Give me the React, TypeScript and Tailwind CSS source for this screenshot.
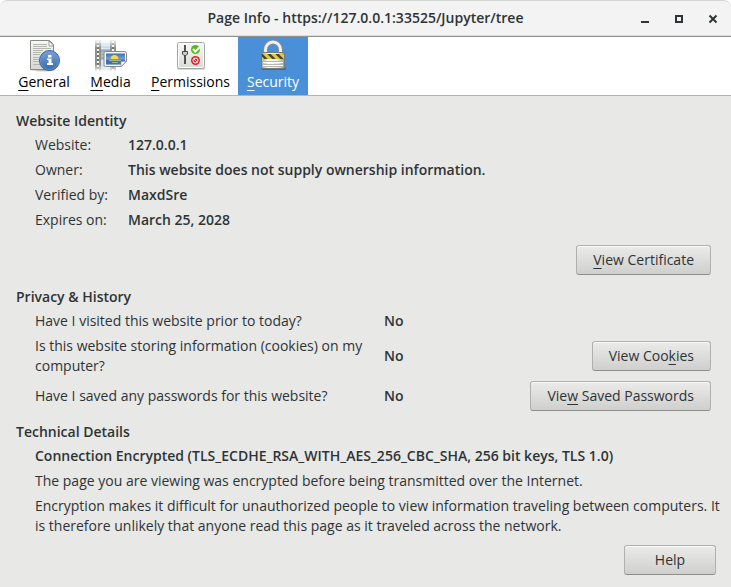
import type { ReactNode } from "react";

function Key({ children }: { children: ReactNode }) {
  return <span className="underline decoration-1 underline-offset-3 [text-decoration-skip-ink:none]">{children}</span>;
}

function GeneralIcon() {
  return (
    <svg className="size-8" viewBox="0 0 32 32" aria-hidden="true">
      <defs>
        <linearGradient id="g-page" x1="0" y1="0" x2="0" y2="1">
          <stop offset="0" stopColor="#f8f8f6" />
          <stop offset="1" stopColor="#d6d7d2" />
        </linearGradient>
        <linearGradient id="g-info" x1="0" y1="0" x2="0" y2="1">
          <stop offset="0" stopColor="#7ba3d6" />
          <stop offset="1" stopColor="#3569ae" />
        </linearGradient>
        <radialGradient id="g-shadow">
          <stop offset="0" stopColor="#000" stopOpacity=".4" />
          <stop offset="1" stopColor="#000" stopOpacity="0" />
        </radialGradient>
      </defs>
      <ellipse cx="15" cy="30" rx="15" ry="2" fill="url(#g-shadow)" />
      <path d="M2.500.5h19l4 4v25h-23z" fill="url(#g-page)" stroke="#888a85" />
      <path d="M21 1v5h4.500z" fill="#fff" stroke="#888a85" strokeWidth=".8" />
      <path d="M5 4.500h14M5 6.500h14M5 8.500h18M5 10.500h10M5 12.500h8M5 14.500h7M5 17.500h6M5 19.500h6M5 21.500h6M5 24.500h8" stroke="#b4b6b0" />
      <circle cx="21.500" cy="20.500" r="10" fill="url(#g-info)" stroke="#2c5b9b" />
      <circle cx="21.500" cy="20.500" r="9" fill="none" stroke="#6d98cf" strokeWidth=".8" />
      <path d="M20 15h3.500v2.500H20zM19 18.500h4.500v4.500H25v2h-6v-2h1.500v-3H19z" fill="#fff" />
    </svg>
  );
}

function MediaIcon() {
  return (
    <svg className="size-8" viewBox="0 0 32 32" aria-hidden="true">
      <defs>
        <linearGradient id="m-fade" x1="0" y1="0" x2="0" y2="1">
          <stop offset="0" stopColor="#fff" stopOpacity=".1" />
          <stop offset=".25" stopColor="#fff" />
          <stop offset=".75" stopColor="#fff" />
          <stop offset="1" stopColor="#fff" stopOpacity=".05" />
        </linearGradient>
        <mask id="m-mask">
          <rect width="32" height="32" fill="url(#m-fade)" />
        </mask>
        <linearGradient id="m-sky" x1="0" y1="0" x2="0" y2="1">
          <stop offset="0" stopColor="#3d70b5" />
          <stop offset="1" stopColor="#b8d4ee" />
        </linearGradient>
      </defs>
      <g mask="url(#m-mask)">
        <rect x="0" width="21" height="31" fill="#babdb6" />
        <path d="M.5 0v31M5.500 0v31M15.500 0v31M20.500 0v31" stroke="#8c8e89" />
        <path d="M3 0v31M18 0v31" stroke="#6f716c" strokeWidth="3" />
        <path d="M3 1v30M18 1v30" stroke="#f4f4f2" strokeWidth="2" strokeDasharray="2 2" />
        <rect x="6" y="0" width="9" height="9" fill="#dce9f5" />
        <rect x="6" y="10" width="9" height="9" fill="#8eaecb" />
        <path d="M6 4h9M6 7h9" stroke="#a9c6e3" />
        <path d="M6 13h9M6 16h9" stroke="#d8d5a5" />
        <rect x="6" y="20" width="9" height="11" fill="#d8e6f3" />
        <path d="M6 26h9M6 29h9" stroke="#a3bfdb" />
      </g>
      <path d="M10.500 11.500h19q2 0 2 2v8l-5 5h-16q-1.500 0-1.500-1.500v-12q0-1.500 1.500-1.500z" fill="#f5f5f3" stroke="#888a85" />
      <path d="M11 13.500h19v7l-4 4H11z" fill="url(#m-sky)" />
      <path d="M15.500 19.500a4 4.500 0 0 1 8 0z" fill="#f1dc48" />
      <path d="M11 19.500h19v1l-4 4H11z" fill="#3f72b0" />
      <path d="M14 20.500h12M17 22.500h6" stroke="#bfc58b" strokeWidth=".8" />
      <path d="M31 21.500l-5 5v-4q0-1 1-1z" fill="#fff" stroke="#9b9d98" strokeWidth=".7" />
    </svg>
  );
}

function PermissionsIcon() {
  return (
    <svg className="size-8" viewBox="0 0 32 32" aria-hidden="true">
      <defs>
        <linearGradient id="p-plate" x1="0" y1="0" x2="0" y2="1">
          <stop offset="0" stopColor="#f9f9f8" />
          <stop offset="1" stopColor="#d9dad6" />
        </linearGradient>
      </defs>
      <rect x="2" y="27" width="28" height="3" rx="1.500" fill="#000" opacity=".15" />
      <rect x="2.500" y="2.500" width="27" height="26" rx="2" fill="url(#p-plate)" stroke="#a2a49f" />
      <rect x="3.500" y="3.500" width="25" height="24" rx="1" fill="none" stroke="#fff" />
      <path d="M10 5v19" stroke="#3f423f" strokeWidth="1.800" />
      <path d="M7.500 11.500h5v2.500l-1.500 1.500H9l-1.500-1.500z" fill="#c9cbc6" stroke="#444743" />
      <circle cx="20.500" cy="9.500" r="4.500" fill="#57ba22" />
      <path d="M18 9l2.300 2.500L26 6" fill="none" stroke="#fff" strokeWidth="2" />
      <circle cx="20.500" cy="20.500" r="4.500" fill="#ea2029" />
      <circle cx="20.500" cy="20.500" r="2.500" fill="none" stroke="#fff" strokeWidth="1" />
      <path d="M18.800 18.800l3.400 3.400" stroke="#fff" strokeWidth="1" />
    </svg>
  );
}

function SecurityIcon() {
  return (
    <svg className="size-8" viewBox="0 0 32 32" aria-hidden="true">
      <defs>
        <linearGradient id="s-body" x1="0" y1="0" x2="1" y2="0">
          <stop offset="0" stopColor="#aaaca7" />
          <stop offset=".3" stopColor="#fafafa" />
          <stop offset=".7" stopColor="#e8e8e6" />
          <stop offset="1" stopColor="#979994" />
        </linearGradient>
        <clipPath id="s-band">
          <rect x="5" y="14" width="22" height="5" />
        </clipPath>
      </defs>
      <rect x="4" y="27" width="25" height="3" rx="1.500" fill="#123a6d" opacity=".4" />
      <path d="M8.500 13V9.500a7.500 7.500 0 0 1 15 0V13" fill="none" stroke="#8b8e89" strokeWidth="4.500" />
      <path d="M8.500 13V9.500a7.500 7.500 0 0 1 15 0V13" fill="none" stroke="#f1f1ef" strokeWidth="2.900" />
      <rect x="4.500" y="12.500" width="23" height="16" rx="1.500" fill="url(#s-body)" stroke="#777a75" />
      <g clipPath="url(#s-band)">
        <rect x="5" y="14" width="22" height="5" fill="#e5ce32" />
        <path d="M2 12l8 8M10 12l8 8M18 12l8 8M26 12l8 8" stroke="#45453a" strokeWidth="2.500" />
      </g>
      <path d="M6 21.500h20M6 24.500h20M6 26.500h20" stroke="#b4b6b1" />
      <path d="M6 22.500h20M6 25.500h20" stroke="#fff" />
    </svg>
  );
}

function Tab({ icon, selected = false, className, children }: { icon: ReactNode; selected?: boolean; className: string; children: ReactNode }) {
  return (
    <button
      role="tab"
      aria-selected={selected}
      className={`flex h-[58px] flex-col items-center pt-[3px] leading-5 ${selected ? "bg-[#4a90d9] text-white" : "text-black"} ${className}`}
    >
      {icon}
      <span>{children}</span>
    </button>
  );
}

function PushButton({ className = "px-4", children }: { className?: string; children: ReactNode }) {
  return (
    <button
      className={`h-[30px] shrink-0 rounded-[3px] border border-[#b0b1ae] border-b-[#8d8e8b] bg-linear-to-b from-[#ebebea] to-[#cfcfcd] leading-5 whitespace-nowrap shadow-[inset_0_1px_#fafafa] ${className}`}
    >
      {children}
    </button>
  );
}

const identity = [
  ["Website:", "127.0.0.1"],
  ["Owner:", "This website does not supply ownership information."],
  ["Verified by:", "MaxdSre"],
  ["Expires on:", "March 25, 2028"],
];

function HistoryRow({ question, children }: { question: string; children?: ReactNode }) {
  return (
    <div className="flex items-center">
      <p className="w-[349px] shrink-0 pr-5">{question}</p>
      <p className="flex-1 font-semibold">No</p>
      {children}
    </div>
  );
}

export default function App() {
  return (
    <div className="min-h-screen bg-white font-['Open_Sans','Noto_Sans',sans-serif] text-[14px] leading-5 text-[#2e3436]">
      <div className="flex min-h-screen flex-col overflow-hidden rounded-t-[7px] bg-[#e8e8e6]">
        <header className="grid h-[37px] grid-cols-[1fr_auto_1fr] items-center rounded-t-[7px] border border-x-0 border-t-[#d5d5d3] border-b-[#8f918c] bg-[#f3f3f3] pb-px shadow-[inset_0_-1px_#dededc]">
          <h1 className="col-start-2 font-semibold">Page Info - https://127.0.0.1:33525/Jupyter/tree</h1>
          <div className="flex justify-end gap-[18px] pr-[10px]">
            <button aria-label="Minimize" className="size-4">
              <svg viewBox="0 0 16 16" fill="#2e3436"><path d="M4 11h8v2H4z" /></svg>
            </button>
            <button aria-label="Maximize" className="size-4">
              <svg viewBox="0 0 16 16" fill="none" stroke="#2e3436" strokeWidth="2"><path d="M5 6h6v6H5z" /></svg>
            </button>
            <button aria-label="Close" className="size-4">
              <svg viewBox="0 0 16 16" fill="none" stroke="#2e3436" strokeWidth="2"><path d="M4.500 5.500l7 7M11.500 5.500l-7 7" /></svg>
            </button>
          </div>
        </header>

        <nav role="tablist" className="flex border-b border-[#b4b5b2] bg-white pl-[10px]">
          <Tab icon={<GeneralIcon />} className="w-[68px]"><Key>G</Key>eneral</Tab>
          <Tab icon={<MediaIcon />} className="w-[65px]"><Key>M</Key>edia</Tab>
          <Tab icon={<PermissionsIcon />} className="w-[95px]"><Key>P</Key>ermissions</Tab>
          <Tab icon={<SecurityIcon />} selected className="w-[70px]"><Key>S</Key>ecurity</Tab>
        </nav>

        <main className="flex flex-col pt-[15px] pr-1 pb-3 pl-4">
          <section>
            <h2 className="font-semibold">Website Identity</h2>
            <dl className="mt-1 grid grid-cols-[93px_1fr] gap-y-[5px] pl-[19px]">
              {identity.map(([term, value]) => (
                <div key={term} className="contents">
                  <dt>{term}</dt>
                  <dd className="font-semibold">{value}</dd>
                </div>
              ))}
            </dl>
            <div className="mt-[15px] flex justify-end pr-4">
              <PushButton><Key>V</Key>iew Certificate</PushButton>
            </div>
          </section>

          <section className="mt-3">
            <h2 className="font-semibold">Privacy &amp; History</h2>
            <div className="mt-1 flex flex-col gap-[5px] pr-4 pl-[19px]">
              <HistoryRow question="Have I visited this website prior to today?" />
              <HistoryRow question="Is this website storing information (cookies) on my computer?">
                <PushButton>View Coo<Key>k</Key>ies</PushButton>
              </HistoryRow>
              <HistoryRow question="Have I saved any passwords for this website?">
                <PushButton>Vie<Key>w</Key> Saved Passwords</PushButton>
              </HistoryRow>
            </div>
          </section>

          <section className="mt-[11px]">
            <h2 className="font-semibold">Technical Details</h2>
            <div className="mt-1 flex flex-col gap-[5px] pl-[19px]">
              <p className="font-semibold">Connection Encrypted (TLS_ECDHE_RSA_WITH_AES_256_CBC_SHA, 256 bit keys, TLS 1.0)</p>
              <p>The page you are viewing was encrypted before being transmitted over the Internet.</p>
              <p>Encryption makes it difficult for unauthorized people to view information traveling between computers. It is therefore unlikely that anyone read this page as it traveled across the network.</p>
            </div>
          </section>

          <div className="mt-[9px] flex justify-end pr-[11px]">
            <PushButton className="w-[92px]">Help</PushButton>
          </div>
        </main>
      </div>
    </div>
  );
}
